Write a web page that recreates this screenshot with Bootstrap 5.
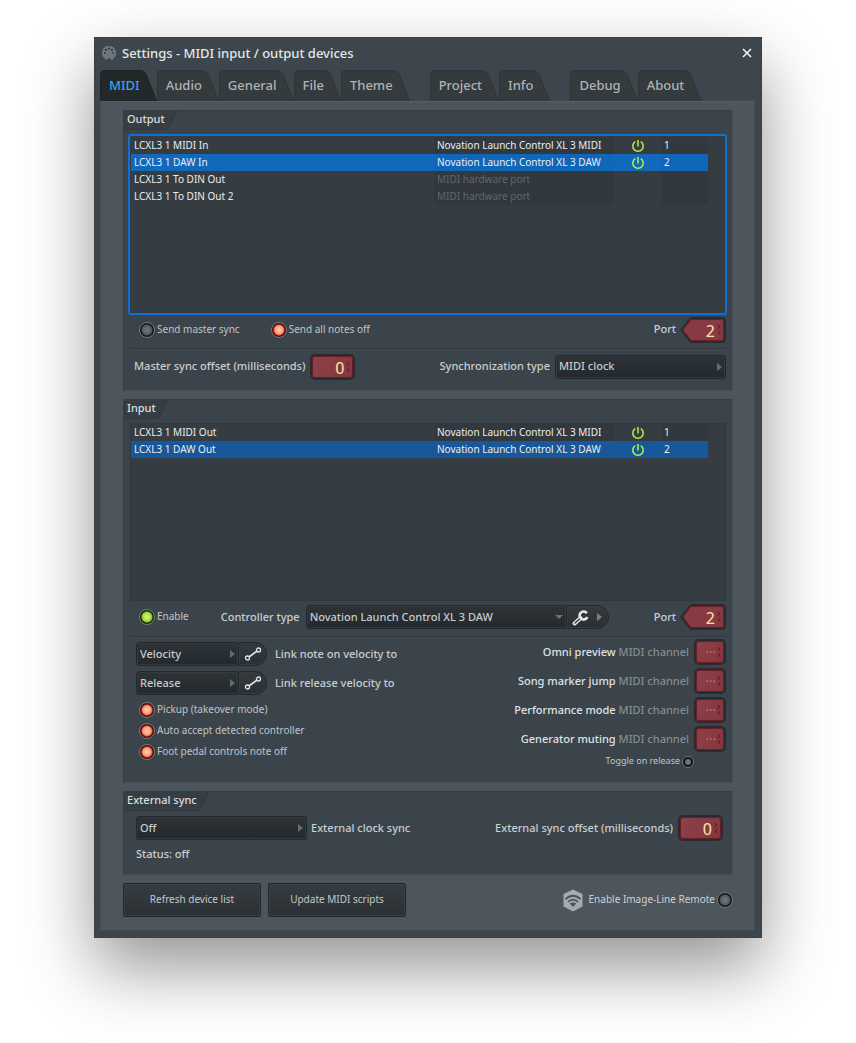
<!DOCTYPE html>
<html lang="en">
<head>
<meta charset="utf-8">
<meta name="viewport" content="width=device-width, initial-scale=1">
<title>Settings - MIDI input / output devices</title>
<link href="https://cdn.jsdelivr.net/npm/bootstrap@5.3.0/dist/css/bootstrap.min.css" rel="stylesheet">
<style>
  body { background: #fff; font: 500 11px/17px "Noto Sans", sans-serif; color: #c9ced1; padding: 37px 94px 106px; }
  .win { background: #3d464c; border: 1px solid #394147; padding: 0 6px 6px 5px; box-shadow: 0 30px 64px rgba(0,0,0,.42); }
  .titlebar { height: 32px; font-size: 13px; color: #e2e6e8; padding: 0 1px 2px 2px; }
  .titlebar span { padding-left: 6px; }
  .close-x { background: none; border: 0; padding: 0; width: 14px; height: 14px; line-height: 0; }

  .tabs { height: 31px; }
  .tabs a { display: block; height: 31px; line-height: 30px; font-size: 13px; color: #adb3b7; text-decoration: none;
    border-style: solid; border-width: 0 17px 0 9px; border-color: transparent;
    border-image: url("data:image/svg+xml,%3Csvg xmlns='http://www.w3.org/2000/svg' width='60' height='31'%3E%3Cpath d='M.5 32V5Q.5 .5 5 .5H43Q47 .5 49 4L60 32z' fill='%23353a3d' stroke='%232e3539'/%3E%3C/svg%3E") 0 17 0 9 fill; }
  .tabs a.active { color: #38a2ee;
    border-image-source: url("data:image/svg+xml,%3Csvg xmlns='http://www.w3.org/2000/svg' width='60' height='31'%3E%3Cpath d='M.5 32V5Q.5 .5 5 .5H43Q47 .5 49 4L60 32z' fill='%2323282b' stroke='%231e2326'/%3E%3C/svg%3E"); }
  .tabs li.group-a { margin-left: 20px; }

  .sheet { background: #4d565d; border: 1px solid #434b51; border-top-color: #565f66; padding: 8px 21px 13px 22px; }
  .sect { background: #3c444b; border: 1px solid #363e44; border-right-color: #464f56; border-bottom-color: #464f56; margin: 0 0 8px; padding: 0 5px; }
  .sect-name { height: 19px; line-height: 15px; margin: 0 0 0 -6px; color: #dadee0; font-size: 11px; font-weight: 500;
    border-style: solid; border-width: 0 13px 0 4px; border-color: transparent;
    border-image: url("data:image/svg+xml,%3Csvg xmlns='http://www.w3.org/2000/svg' width='60' height='19'%3E%3Cpath d='M-1 -1H59L51 16Q50 18.500 47 18.500H-1z' fill='%23363e44' stroke='%2332393f'/%3E%3C/svg%3E") 0 13 0 4 fill; }

  .listbox { background: #353d43; border: 1px solid #31383e; height: 178px; padding: 0 17px 0 0; margin: 2px 1px 0; }
  .listbox.focus { border: 2px solid #0f6fd2; border-radius: 3px; height: 181px; padding: 1px 17px 0 1px; margin: 0 0 0 -1px; }
  .dev { width: 100%; table-layout: fixed; font-size: 10px; font-weight: 400; color: #eceeef; }
  .dev td { height: 17px; padding: 0 0 0 3px; line-height: 17px; }
  .dev td:nth-child(2), .dev td:nth-child(4) { background: #31383e; }
  .dev td.none { color: #5f676d; }
  .dev tr.sel td { background: #1066b8; }
  .dev tr.sel td:nth-child(odd) { background: #1268bb; }
  .dev.dim tr.sel td { background: #18579a; }
  .c2 { width: 180px; } .c3, .c4 { width: 47px; }
  .pw { display: block; margin-left: 14px; }

  .rule { height: 1px; background: #30373c; margin: 0 0 0 1px; box-shadow: 0 1px #424a51; }

  label, .txt { padding-bottom: 2px; }
  .led { appearance: none; width: 16px; height: 16px; flex: none; margin: 0; border-radius: 50%; border: 1px solid #77797a;
    background: radial-gradient(circle, #687175 0 2px, #4d5559 5px, #101416 6px); }
  .led:checked { background: radial-gradient(circle at 50% 50%, #ffd2b2 0, #ff9c7a 4px, #e8573c 5px, #4b0c0a 6px); }
  .led.green:checked { background: radial-gradient(circle at 50% 50%, #d9f68c 0, #a5df3c 4px, #82bd2c 5px, #18270a 6px); }
  .led.tiny { width: 12px; height: 12px; background: radial-gradient(circle, #70777a 0 2px, #45494b 3px, #060708 4px); }
  .chk { display: flex; align-items: center; gap: 2px; font-size: 10px; font-weight: 400; color: #bfc5c8; }
  .chk label { line-height: 14px; }
  .led-next { margin-left: 31px; }

  .num { width: 45px; height: 26px; flex: none; border: 2px solid #262d31; border-radius: 5px; padding: 1px 9px 0 0; text-align: right;
    font: 400 17px/20px "Noto Sans Display", "Noto Sans", sans-serif; color: #fbe3a6; box-shadow: inset 0 0 0 1px #6d1c25;
    background: url("data:image/svg+xml,%3Csvg xmlns='http://www.w3.org/2000/svg' width='4' height='12' fill='none' stroke='%235c1a22'%3E%3Cpath d='M.5 1L3 3L.5 5M3.500 7L1 9L3.500 11'/%3E%3C/svg%3E") no-repeat right 3px center, linear-gradient(115deg, #8d4149, #85353e); }
  .num.off { width: 32px; font-size: 13px; color: #cf7468; padding: 0 8px 0 0; }
  .num.port { width: 46px; border: 0; border-radius: 0; box-shadow: none; padding: 1px 11px 0 0;
    background: url("data:image/svg+xml,%3Csvg xmlns='http://www.w3.org/2000/svg' width='46' height='26' fill='none'%3E%3Cpath d='M12 1H41Q45 1 45 5V21Q45 25 41 25H12Q10 25 9 23L2 14Q1 13 2 12L9 3Q10 1 12 1z' fill='%23883a43' stroke='%23262d31' stroke-width='2'/%3E%3Cpath d='M12 2.500H41Q43.500 2.500 43.500 5V21Q43.500 23.500 41 23.500H12Q11 23.500 10 22L3 13L10 4Q11 2.500 12 2.500z' stroke='%236d1c25'/%3E%3Cpath d='M37.500 8L40 10L37.500 12M40.500 14L38 16L40.500 18' stroke='%235c1a22'/%3E%3C/svg%3E") no-repeat; }

  .drop { appearance: none; height: 24px; min-width: 0; border: 1px solid #22282c; border-radius: 3px; padding: 0 18px 2px 3px; color: #c6cbce; font: 500 11px/19px "Noto Sans", sans-serif;
    box-shadow: inset 0 0 0 1px #343b40;
    background: url("data:image/svg+xml,%3Csvg xmlns='http://www.w3.org/2000/svg' width='5' height='8'%3E%3Cpath d='M0 0L5 4L0 8z' fill='%23666d71'/%3E%3C/svg%3E") no-repeat right 3px center, linear-gradient(#2d3337, #23292c); }
  .drop.down { background: url("data:image/svg+xml,%3Csvg xmlns='http://www.w3.org/2000/svg' width='8' height='5'%3E%3Cpath d='M0 0H8L4 4z' fill='%236b7276'/%3E%3C/svg%3E") no-repeat right 3px center, linear-gradient(#2d3337, #23292c); }
  .drop.wide { width: 171px; }
  .drop.mid { width: 103px; }
  .tool { height: 24px; border: 1px solid #22282c; border-radius: 2px 12px 12px 2px; padding: 0; box-shadow: inset 0 0 0 1px #363d42; background: linear-gradient(#343a3e, #292f33); display: flex; align-items: center; justify-content: center; flex: none; margin-left: -1px; }
  .w-link { width: 29px; }
  .w-wrench { width: 43px; gap: 8px; }

  .row-a { height: 33px; padding: 0 1px 4px 10px; }
  .row-a.roomy { height: 35px; padding-bottom: 3px; }
  .row-b { height: 41px; padding: 0 1px 6px 5px; }
  .lab { margin-right: 5px; }
  .ctl-lab { margin: 0 6px 0 32px; }
  .port-lab { margin: 0 4px 0 45px; }
  .inset-l { padding-left: 7px; }
  .links { gap: 5px; padding-top: 3px; }
  .checks { gap: 5px; padding: 2px 0 0 3px; }
  .chans { gap: 3px; }
  .io { padding: 2px 1px 14px 0; }
  .ch { color: #858c90; }
  .bright { color: #dfe2e4; }
  .act { width: 138px; height: 34px; border: 1px solid #1f272c; border-radius: 2px; background: linear-gradient(#363c40, #2a3034); box-shadow: inset 0 0 0 1px #3b4247; color: #c3c9cc; font-size: 10px; font-weight: 400; padding: 0 0 2px; }
  .acts { gap: 7px; }
  .chk .small-lbl { font-size: 9px; line-height: 11px; }
  .remote { font-size: 10px; color: #ccd1d4; }
</style>
</head>
<body>
<svg class="d-none" aria-hidden="true">
  <symbol id="power" viewBox="0 0 14 14"><path d="M4.300 2.600A5.200 5.200 0 1 0 9.700 2.600M7 1V7.500" fill="none" stroke="#b4f04c" stroke-width="1.500"/></symbol>
  <symbol id="link" viewBox="0 0 18 14"><path d="M5 10L13 4" stroke="#e2e5e6" stroke-width="1.600"/><circle cx="3.500" cy="11" r="2" fill="none" stroke="#e2e5e6" stroke-width="1.300"/><circle cx="14.500" cy="3" r="2" fill="none" stroke="#e2e5e6" stroke-width="1.300"/></symbol>
</svg>
<main class="win">
  <header class="titlebar d-flex align-items-center">
    <svg width="14" height="14" viewBox="0 0 14 14"><path d="M7 0A7 7 0 0 0 3 12.800V14H5V12.500H9V14H11V12.800A7 7 0 0 0 7 0z" fill="#71777b"/><g fill="#353c41"><circle cx="2.800" cy="7" r="1.100"/><circle cx="4" cy="3.900" r="1.100"/><circle cx="7" cy="2.600" r="1.100"/><circle cx="10" cy="3.900" r="1.100"/><circle cx="11.200" cy="7" r="1.100"/></g></svg>
    <span class="flex-grow-1">Settings - MIDI input / output devices</span>
    <button class="close-x" aria-label="Close"><svg width="10" height="10"><path d="M1 1L9 9M9 1L1 9" stroke="#f2f4f5" stroke-width="1.600"/></svg></button>
  </header>
  <ul class="tabs list-unstyled d-flex mb-0">
    <li><a class="active" href="#midi">MIDI</a></li>
    <li><a href="#audio">Audio</a></li>
    <li><a href="#general">General</a></li>
    <li><a href="#file">File</a></li>
    <li><a href="#theme">Theme</a></li>
    <li class="group-a"><a href="#project">Project</a></li>
    <li><a href="#info">Info</a></li>
    <li class="group-a"><a href="#debug">Debug</a></li>
    <li><a href="#about">About</a></li>
  </ul>

  <div class="sheet">
    <section class="sect">
      <div class="d-flex mb-1"><h2 class="sect-name">Output</h2></div>
      <div class="listbox focus">
        <table class="dev">
          <colgroup><col><col class="c2"><col class="c3"><col class="c4"></colgroup>
          <tbody>
          <tr><td>LCXL3 1 MIDI In</td><td>Novation Launch Control XL 3 MIDI</td><td><svg class="pw" width="14" height="14"><use href="#power"/></svg></td><td>1</td></tr>
          <tr class="sel"><td>LCXL3 1 DAW In</td><td>Novation Launch Control XL 3 DAW</td><td><svg class="pw" width="14" height="14"><use href="#power"/></svg></td><td>2</td></tr>
          <tr><td>LCXL3 1 To DIN Out</td><td class="none">MIDI hardware port</td><td></td><td></td></tr>
          <tr><td>LCXL3 1 To DIN Out 2</td><td class="none">MIDI hardware port</td><td></td><td></td></tr>
          </tbody>
        </table>
      </div>
      <div class="row-a d-flex align-items-center">
        <div class="chk"><input class="led" type="checkbox" id="sync"><label for="sync">Send master sync</label></div>
        <div class="chk led-next"><input class="led" type="checkbox" id="notesoff" checked><label for="notesoff">Send all notes off</label></div>
        <label class="ms-auto me-1" for="port1">Port</label>
        <input class="num port" id="port1" value="2">
      </div>
      <div class="rule"></div>
      <div class="row-b d-flex align-items-center">
        <label class="lab" for="mso">Master sync offset (milliseconds)</label>
        <input class="num" id="mso" value="0">
        <label class="ms-auto lab" for="stype">Synchronization type</label>
        <select class="drop wide" id="stype"><option>MIDI clock</option></select>
      </div>
    </section>

    <section class="sect">
      <div class="d-flex mb-1"><h2 class="sect-name">Input</h2></div>
      <div class="listbox">
        <table class="dev dim">
          <colgroup><col><col class="c2"><col class="c3"><col class="c4"></colgroup>
          <tbody>
          <tr><td>LCXL3 1 MIDI Out</td><td>Novation Launch Control XL 3 MIDI</td><td><svg class="pw" width="14" height="14"><use href="#power"/></svg></td><td>1</td></tr>
          <tr class="sel"><td>LCXL3 1 DAW Out</td><td>Novation Launch Control XL 3 DAW</td><td><svg class="pw" width="14" height="14"><use href="#power"/></svg></td><td>2</td></tr>
          </tbody>
        </table>
      </div>
      <div class="row-a roomy d-flex align-items-center">
        <div class="chk"><input class="led green" type="checkbox" id="en" checked><label for="en">Enable</label></div>
        <label class="ctl-lab" for="ctype">Controller type</label>
        <select class="drop down flex-grow-1" id="ctype"><option>Novation Launch Control XL 3 DAW</option></select>
        <button class="tool w-wrench" aria-label="Controller settings">
          <svg width="17" height="17" viewBox="0 0 17 17"><path d="M2.600 14.400L8.500 9" stroke="#e6e8e9" stroke-width="4" stroke-linecap="round"/><path d="M14.800 4.200A4 4 0 1 0 15.300 8" fill="none" stroke="#e6e8e9" stroke-width="2.600"/><path d="M3 14L7.500 10" stroke="#2d3337" stroke-width="1.300" stroke-linecap="round"/></svg>
          <svg width="5" height="8"><path d="M0 0L5 4L0 8z" fill="#7b8185"/></svg>
        </button>
        <label class="port-lab" for="port2">Port</label>
        <input class="num port" id="port2" value="2">
      </div>
      <div class="rule"></div>
      <div class="io d-flex justify-content-between">
        <div class="vstack links inset-l">
          <div class="d-flex align-items-center">
            <select class="drop mid" aria-label="Note on velocity target"><option>Velocity</option></select>
            <button class="tool w-link" aria-label="Link velocity"><svg width="18" height="14"><use href="#link"/></svg></button>
            <span class="ms-2 txt">Link note on velocity to</span>
          </div>
          <div class="d-flex align-items-center">
            <select class="drop mid" aria-label="Release velocity target"><option>Release</option></select>
            <button class="tool w-link" aria-label="Link release"><svg width="18" height="14"><use href="#link"/></svg></button>
            <span class="ms-2 txt">Link release velocity to</span>
          </div>
          <div class="vstack checks">
            <div class="chk"><input class="led" type="checkbox" id="pick" checked><label for="pick">Pickup (takeover mode)</label></div>
            <div class="chk"><input class="led" type="checkbox" id="auto" checked><label for="auto">Auto accept detected controller</label></div>
            <div class="chk"><input class="led" type="checkbox" id="foot" checked><label for="foot">Foot pedal controls note off</label></div>
          </div>
        </div>
        <div class="vstack chans align-items-end">
          <div class="d-flex align-items-center"><label class="lab" for="c1"><span class="bright">Omni preview</span> <span class="ch">MIDI channel</span></label><input class="num off" id="c1" value="···"></div>
          <div class="d-flex align-items-center"><label class="lab" for="c2"><span class="bright">Song marker jump</span> <span class="ch">MIDI channel</span></label><input class="num off" id="c2" value="···"></div>
          <div class="d-flex align-items-center"><label class="lab" for="c3"><span class="bright">Performance mode</span> <span class="ch">MIDI channel</span></label><input class="num off" id="c3" value="···"></div>
          <div class="d-flex align-items-center"><label class="lab" for="c4"><span class="bright">Generator muting</span> <span class="ch">MIDI channel</span></label><input class="num off" id="c4" value="···"></div>
          <div class="chk me-4 pe-2"><label class="small-lbl" for="tog">Toggle on release</label><input class="led tiny" type="checkbox" id="tog"></div>
        </div>
      </div>
    </section>

    <section class="sect">
      <div class="d-flex mb-1"><h2 class="sect-name">External sync</h2></div>
      <div class="d-flex align-items-center inset-l">
        <select class="drop wide" id="ext"><option>Off</option></select>
        <label class="ms-1" for="ext">External clock sync</label>
        <label class="ms-auto lab" for="eso">External sync offset (milliseconds)</label>
        <input class="num me-1" id="eso" value="0">
      </div>
      <p class="mb-2 mt-1 pb-1 inset-l">Status: off</p>
    </section>

    <footer class="acts d-flex align-items-center">
      <button class="act">Refresh device list</button>
      <button class="act">Update MIDI scripts</button>
      <div class="chk remote ms-auto">
        <svg class="me-1" width="20" height="23" viewBox="0 0 20 23"><path d="M10 .5L19.500 5V17.500L10 22.500L.5 17.500V5z" fill="#a5abae"/><g fill="none" stroke="#4a5258" stroke-width="1.700"><path d="M2.500 10Q10 3.500 17.500 10M5 12.800Q10 8.300 15 12.800"/></g><path d="M10 18L6.800 14.600Q10 12.300 13.200 14.600z" fill="#4a5258"/></svg>
        <label for="rem">Enable Image-Line Remote</label><input class="led" type="checkbox" id="rem">
      </div>
    </footer>
  </div>
</main>
<script src="https://cdn.jsdelivr.net/npm/bootstrap@5.3.0/dist/js/bootstrap.bundle.min.js"></script>
</body>
</html>
